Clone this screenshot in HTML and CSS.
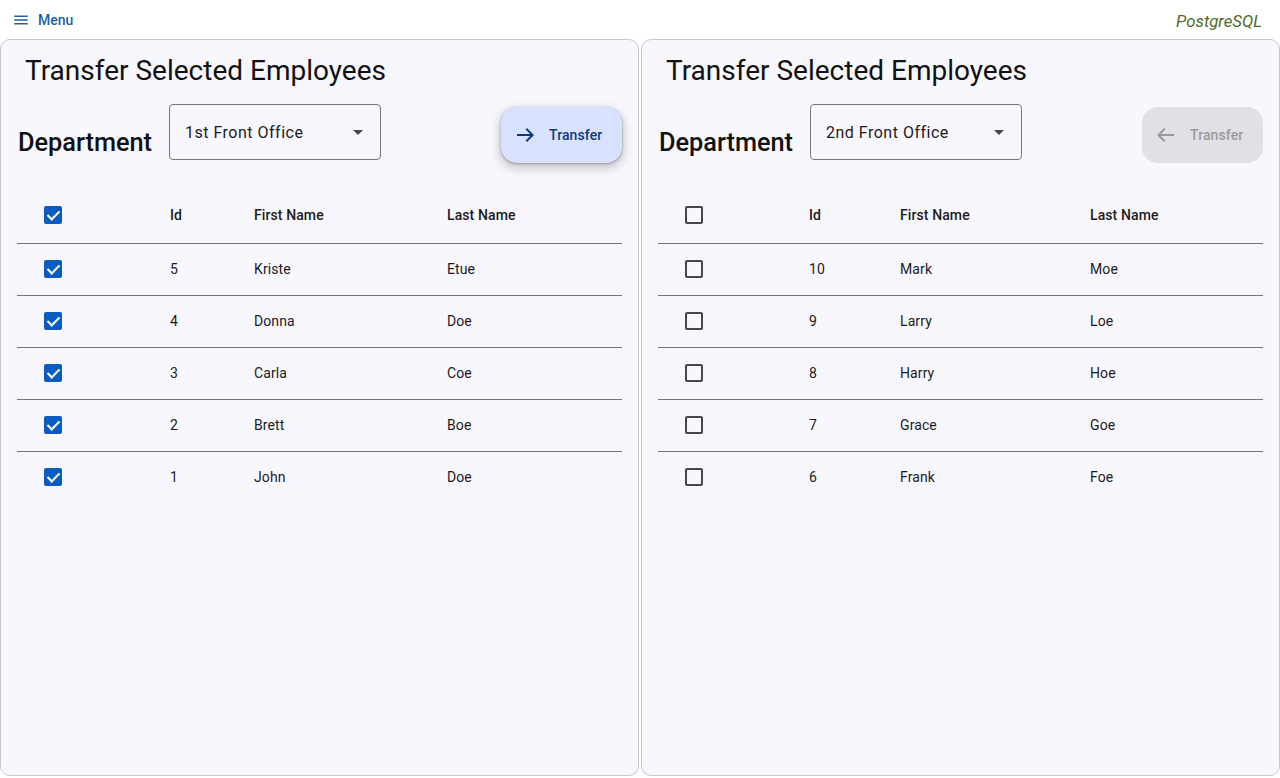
FILE: index.html
```html
<!DOCTYPE html>
<html>
<head>
<meta charset="utf-8">
<link rel="stylesheet" href="styles.css">
</head>
<body>
<header class="topbar">
  <button class="menu-btn">
    <svg class="menu-icon" viewBox="0 0 24 24" width="18" height="18"><path d="M3 18h18v-2H3v2zm0-5h18v-2H3v2zm0-7v2h18V6H3z" fill="currentColor"/></svg>
    <span>Menu</span>
  </button>
  <span class="db-name">PostgreSQL</span>
</header>
<main class="panes">
  <section class="card">
    <h1 class="title">Transfer Selected Employees</h1>
    <div class="controls">
      <h2 class="dept-label">Department</h2>
      <div class="select"><span>1st Front Office</span><span class="caret"></span></div>
      <div class="spacer"></div>
      <button class="transfer active">
        <svg viewBox="0 0 24 24" width="24" height="24"><path d="M4 11h13.17l-4.59-4.59L14 5l7 7-7 7-1.41-1.41L17.17 13H4z" fill="currentColor"/></svg>
        <span>Transfer</span>
      </button>
    </div>
    <table class="grid left">
      <thead><tr><th class="cb"><span class="box checked"></span></th><th class="c-id">Id</th><th class="c-first">First Name</th><th>Last Name</th></tr></thead>
      <tbody>
        <tr><td class="cb"><span class="box checked"></span></td><td>5</td><td>Kriste</td><td>Etue</td></tr>
        <tr><td class="cb"><span class="box checked"></span></td><td>4</td><td>Donna</td><td>Doe</td></tr>
        <tr><td class="cb"><span class="box checked"></span></td><td>3</td><td>Carla</td><td>Coe</td></tr>
        <tr><td class="cb"><span class="box checked"></span></td><td>2</td><td>Brett</td><td>Boe</td></tr>
        <tr class="last"><td class="cb"><span class="box checked"></span></td><td>1</td><td>John</td><td>Doe</td></tr>
      </tbody>
    </table>
  </section>
  <section class="card">
    <h1 class="title">Transfer Selected Employees</h1>
    <div class="controls">
      <h2 class="dept-label">Department</h2>
      <div class="select"><span>2nd Front Office</span><span class="caret"></span></div>
      <div class="spacer"></div>
      <button class="transfer disabled">
        <svg viewBox="0 0 24 24" width="24" height="24"><path d="M20 11H6.83l4.59-4.59L10 5l-7 7 7 7 1.41-1.41L6.83 13H20z" fill="currentColor"/></svg>
        <span>Transfer</span>
      </button>
    </div>
    <table class="grid right">
      <thead><tr><th class="cb"><span class="box"></span></th><th class="c-id">Id</th><th class="c-first">First Name</th><th>Last Name</th></tr></thead>
      <tbody>
        <tr><td class="cb"><span class="box"></span></td><td>10</td><td>Mark</td><td>Moe</td></tr>
        <tr><td class="cb"><span class="box"></span></td><td>9</td><td>Larry</td><td>Loe</td></tr>
        <tr><td class="cb"><span class="box"></span></td><td>8</td><td>Harry</td><td>Hoe</td></tr>
        <tr><td class="cb"><span class="box"></span></td><td>7</td><td>Grace</td><td>Goe</td></tr>
        <tr class="last"><td class="cb"><span class="box"></span></td><td>6</td><td>Frank</td><td>Foe</td></tr>
      </tbody>
    </table>
  </section>
</main>
</body>
</html>
```
FILE: styles.css
```css
* { box-sizing: border-box; }
html, body { margin: 0; padding: 0; }
body {
  font-family: Roboto, "Noto Sans", sans-serif;
  background: #ffffff;
  color: #1d1b20;
  width: 1280px;
  height: 778px;
  overflow: hidden;
}
.topbar {
  height: 39px;
  display: flex;
  align-items: center;
  justify-content: space-between;
  padding: 0 18px 0 12px;
}
.menu-btn {
  display: flex;
  align-items: center;
  gap: 8px;
  border: 0;
  background: none;
  padding: 0;
  color: #1f5fa8;
  font-family: Roboto, sans-serif;
  font-size: 14px;
  font-weight: 500;
  cursor: pointer;
}
.db-name {
  font-style: italic;
  font-size: 16.8px;
  color: #506b2c;
  padding-top: 3px;
}
.panes {
  display: flex;
  gap: 2px;
  height: 737px;
}
.card {
  flex: 1;
  background: #f8f7fd;
  border: 1px solid #c9c7cd;
  border-radius: 10px;
  padding: 0 16px;
}
.title {
  margin: 15px 0 0 8px;
  font-size: 28px;
  font-weight: 400;
  line-height: 32px;
  letter-spacing: 0;
  color: #111;
}
.controls {
  display: flex;
  align-items: flex-start;
  margin-top: 17px;
  height: 83px;
}
.dept-label {
  margin: 23px 17px 0 1px;
  font-size: 25.3px;
  font-weight: 500;
  line-height: 32px;
  color: #111;
}
.select {
  width: 212px;
  height: 56px;
  border: 1px solid #79747e;
  border-radius: 4px;
  display: flex;
  align-items: center;
  justify-content: space-between;
  padding: 0 16px 0 15px;
  font-size: 16px;
  letter-spacing: 0.5px;
  color: #1d1b20;
}
.caret {
  width: 0; height: 0;
  border-left: 5px solid transparent;
  border-right: 5px solid transparent;
  border-top: 5px solid #49454f;
  margin-right: 1px;
}
.spacer { flex: 1; }
.transfer {
  margin-top: 3px;
  width: 121px;
  height: 56px;
  border: 0;
  border-radius: 16px;
  display: flex;
  align-items: center;
  gap: 12px;
  padding: 0 0 0 12px;
  font-family: Roboto, sans-serif;
  font-size: 14px;
  font-weight: 500;
  letter-spacing: 0.1px;
}
.transfer.active {
  background: #d8e2ff;
  color: #0d3b7a;
  box-shadow: 0 4px 8px 3px rgba(0,0,0,0.15), 0 1px 3px rgba(0,0,0,0.3);
}
.transfer.disabled {
  background: #e1e0e5;
  color: #9a999e;
}
.grid {
  width: 605px;
  border-collapse: collapse;
  table-layout: fixed;
  font-size: 14px;
  letter-spacing: 0.1px;
}
.grid th {
  text-align: left;
  font-weight: 500;
  height: 56px;
  padding: 0;
  border-bottom: 1px solid #76757a;
  color: #1d1b20;
}
.grid td {
  height: 52px;
  padding: 0;
  border-bottom: 1px solid #76757a;
  color: #1d1b20;
}
.grid tr.last td { border-bottom: 0; }
.grid .cb { padding-left: 27px; }
.grid.left .cb { width: 153px; }
.grid.left .c-id { width: 84px; }
.grid.left .c-first { width: 193px; }
.grid.right .cb { width: 151px; }
.grid.right .c-id { width: 91px; }
.grid.right .c-first { width: 190px; }
.box {
  display: block;
  width: 18px;
  height: 18px;
  border: 2px solid #49454f;
  border-radius: 2px;
  position: relative;
}
.box.checked {
  background: #0b5cc0;
  border-color: #0b5cc0;
}
.box.checked::after {
  content: "";
  position: absolute;
  left: 4px;
  top: 0px;
  width: 5px;
  height: 10px;
  border-right: 2px solid #fff;
  border-bottom: 2px solid #fff;
  transform: rotate(45deg);
}
```
